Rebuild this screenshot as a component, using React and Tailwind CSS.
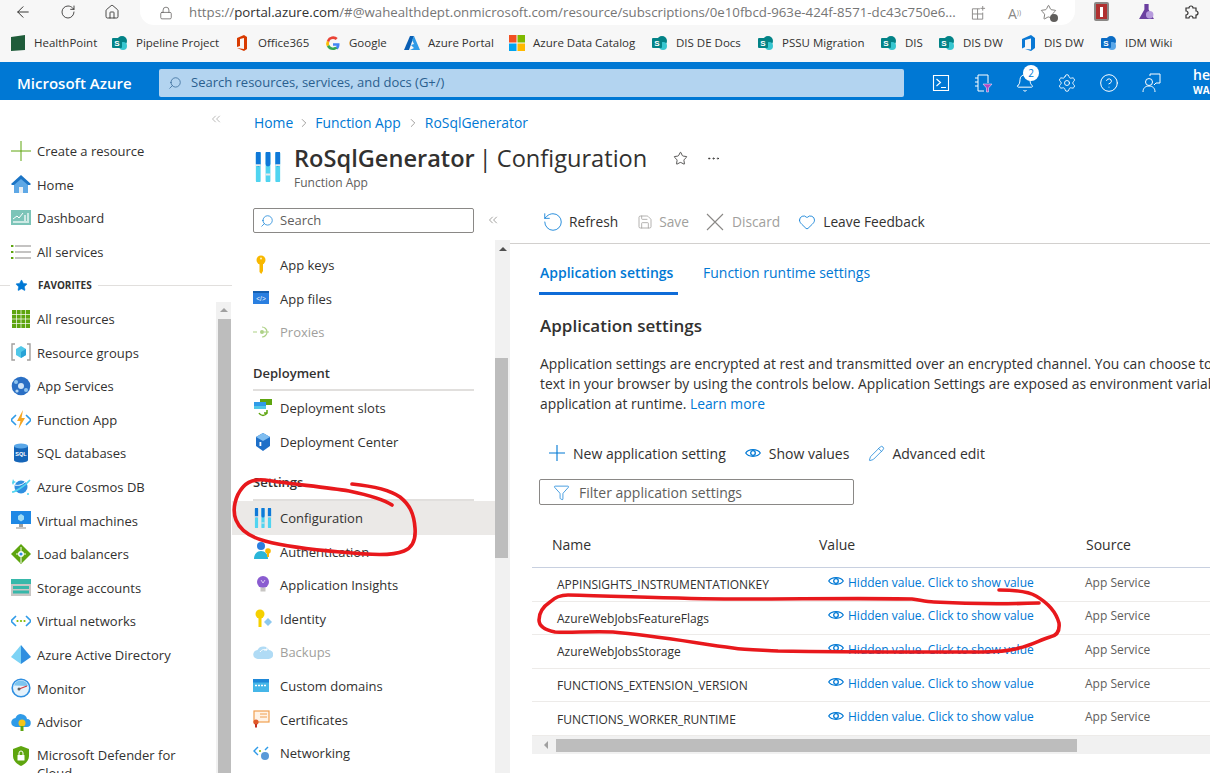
import React from 'react';
import {
  ArrowLeft, RotateCw, Lock, Star, MoreHorizontal, Pencil, Funnel, Heart, Save,
  ChevronsLeft, ChevronRight, Search, Settings, CircleHelp, Bell, Home,
} from 'lucide-react';

const Svg = ({ children, className = 'w-5 h-5' }) => (
  <svg viewBox="0 0 20 20" className={`${className} shrink-0`}>{children}</svg>
);

const EyeIcon = ({ className = 'w-[16px] h-[14px]' }) => (
  <svg viewBox="0 0 16 14" className={`${className} shrink-0`}>
    <path d="M.7 7C3.500 2.600 12.500 2.600 15.300 7C12.500 11.400 3.500 11.400 .7 7z" stroke="#0078d4" strokeWidth="1.200" fill="none" />
    <circle cx="8" cy="7" r="2.300" stroke="#0078d4" strokeWidth="1.300" fill="none" />
  </svg>
);

// Azure service icons
const PlusIcon = () => <Svg><path d="M0 10h20M10 0v20" stroke="#5ea50f" strokeWidth="1" /></Svg>;
const HomeIcon = () => <Svg><path d="M10 1L0 10l1 1h2v8h14v-8h2l1-1z" fill="#1b74c5" /><path d="M3 11l7-6 7 6v8H3z" fill="#5ea8e6" /><rect x="8" y="13" width="4" height="6" fill="#e8eef4" /></Svg>;
const DashIcon = () => <Svg><rect y="2" width="20" height="15" fill="#7cc4b8" /><path d="M2 11l4-3 2 2 4-5" stroke="#fff" fill="none" /><path d="M2 14h16M14 7v6M17 5v8" stroke="#e8f5f2" strokeWidth="1.5" /></Svg>;
const ListIcon = () => <Svg><path d="M4 4h16M4 10h16M4 16h16" stroke="#8a8886" strokeWidth="1.2" /><path d="M0 4h2.4M0 10h2.4M0 16h2.4" stroke="#5ea50f" strokeWidth="2" /></Svg>;
const GridIcon = () => (
  <Svg>
    <rect x="1" y="1" width="18" height="18" fill="#5ea50f" />
    <path d="M5.5 1v18M10 1v18M14.5 1v18M1 5.5h18M1 10h18M1 14.5h18" stroke="#fff" strokeWidth=".7" />
  </Svg>
);
const GroupIcon = () => <Svg><path d="M4 2H1v16h3M16 2h3v16h-3" stroke="#a19f9d" strokeWidth="1.4" fill="none" /><path d="M10 4l5 3v6l-5 3-5-3V7z" fill="#50c7e8" /><path d="M10 10l5-3v6l-5 3z" fill="#2aa3d6" /></Svg>;
const AppSvcIcon = () => <Svg><circle cx="10" cy="10" r="9.3" fill="#2a6fc4" /><circle cx="10" cy="10" r="3" fill="#cfe4f7" /><circle cx="5" cy="6" r="2" fill="#8fc4ef" /><circle cx="15" cy="14" r="2" fill="#8fc4ef" /><circle cx="6" cy="15" r="1.6" fill="#b7d8f3" /></Svg>;
const FuncIcon = () => <Svg><path d="M5 5l-5 5 5 5M15 5l5 5-5 5" stroke="#2f9be8" strokeWidth="1.6" fill="none" /><path d="M12 0L6 11h3.5L7.5 19 14 8h-3.5z" fill="#f5a623" /></Svg>;
const SqlIcon = () => (
  <Svg>
    <path d="M3 3v14c0 1.5 3 2.5 7 2.5s7-1 7-2.5V3z" fill="#1565b8" />
    <ellipse cx="10" cy="3" rx="7" ry="2.5" fill="#5aa7e8" />
    <text x="10" y="13" fontSize="5.5" fontWeight="700" fill="#fff" textAnchor="middle" fontFamily="Liberation Sans">SQL</text>
  </Svg>
);
const CosmosIcon = () => <Svg><circle cx="10" cy="10" r="6.5" fill="#2f8fe0" /><path d="M1 15C4 15 14 9 19 3" stroke="#50d4f0" strokeWidth="1.6" fill="none" /><path d="M4 8c3 1 7 0 10-3" stroke="#fff" fill="none" /><path d="M2 2l1 2 2 1-2 1-1 2-1-2" fill="#50d4f0" /><circle cx="17" cy="17" r="1" fill="#50d4f0" /></Svg>;
const VmIcon = () => <Svg><rect y="1" width="20" height="13" fill="#1e88e5" /><path d="M10 4l3 2v3.5l-3 2-3-2V6z" fill="#9fdcf5" /><rect x="8" y="14" width="4" height="3" fill="#a19f9d" /><rect x="5" y="17" width="10" height="2" fill="#c8c6c4" /></Svg>;
const LbIcon = () => <Svg><path d="M10 0l10 10-10 10L0 10z" fill="#5ea50f" /><circle cx="10" cy="10" r="3" fill="#fff" /><circle cx="10" cy="10" r="1.6" fill="#2f8fe0" /><path d="M10 13v6M5 10h2M13 10h2M10 3v4" stroke="#fff" /></Svg>;
const StorageIcon = () => <Svg><rect y="1" width="20" height="17" fill="#c8c6c4" /><rect y="1" width="20" height="5" fill="#37b8aa" /><rect x="2" y="8" width="16" height="3" fill="#37b8aa" /><rect x="2" y="12.5" width="16" height="3" fill="#37b8aa" /></Svg>;
const VnetIcon = () => <Svg><path d="M5 5l-5 5 5 5M15 5l5 5-5 5" stroke="#2f9be8" strokeWidth="1.6" fill="none" /><circle cx="6.5" cy="10" r="1.1" fill="#7fba00" /><circle cx="10" cy="10" r="1.1" fill="#7fba00" /><circle cx="13.5" cy="10" r="1.1" fill="#7fba00" /></Svg>;
const AadIcon = () => <Svg><path d="M10 0L0 12l10 7z" fill="#7dd3f5" /><path d="M10 0l10 12-10 7z" fill="#2f8fe0" /></Svg>;
const MonitorIcon = () => <Svg><circle cx="10" cy="10" r="8.8" fill="#e4f2fc" stroke="#2f8fe0" strokeWidth="1.6" /><path d="M10 2.5a7.5 7.5 0 0 0-7 5l14 .5a7.5 7.5 0 0 0-7-5.5z" fill="#7cc4ef" /><path d="M8 11l8-3" stroke="#d13438" strokeWidth="1.2" /><circle cx="8" cy="11" r="1.5" fill="#605e5c" /></Svg>;
const AdvisorIcon = () => <Svg><path d="M5 15a4.5 4.5 0 0 1-.5-9A6 6 0 0 1 16 7a4 4 0 0 1-.5 8z" fill="#2f9be8" /><circle cx="11" cy="11" r="3.5" fill="#f5c518" /><rect x="9.5" y="14" width="3" height="5" fill="#5ea50f" /></Svg>;
const DefenderIcon = () => <Svg><path d="M10 0l8 3v7c0 5-4 8-8 10-4-2-8-5-8-10V3z" fill="#5ea50f" /><rect x="6.5" y="9" width="7" height="5.5" rx=".6" fill="#fff" /><path d="M8 9V7a2 2 0 0 1 4 0v2" stroke="#fff" fill="none" /></Svg>;

const KeyIcon = () => <Svg><circle cx="8" cy="5" r="4.500" fill="#f8b800" /><path d="M6.500 8h3.500v8l-1.700 3-1.800-2z" fill="#f8b800" /><circle cx="8" cy="3.500" r="1" fill="#fff3c4" /></Svg>;
const FilesIcon = () => <Svg><rect y="3" width="16" height="13" fill="#2a7fe0" /><rect y="3" width="16" height="2" fill="#155fb0" /><text x="8" y="13" fontSize="6.5" fill="#fff" textAnchor="middle" fontFamily="Liberation Sans">{'</>'}</text></Svg>;
const ProxyIcon = () => <Svg className="w-5 h-5 opacity-50"><path d="M0 10h4M11 10h5M16 10h0" stroke="#5ea50f" strokeWidth="1.2" /><path d="M9 5a5 5 0 1 1 0 10" stroke="#5ea50f" strokeWidth="1.2" fill="none" /><circle cx="9" cy="10" r="2" fill="#5ea50f" /></Svg>;
const SlotsIcon = () => <Svg><rect x="7" y="1" width="12" height="6" fill="#5ea50f" /><rect x="1" y="4" width="12" height="7" fill="#2f9be8" /><rect x="1" y="8" width="12" height="3" fill="#50c7e8" /><path d="M6 15a4.5 4.5 0 0 0 8 0M14 12v3h-3" stroke="#5ea50f" strokeWidth="1.5" fill="none" /></Svg>;
const CenterIcon = () => <Svg><path d="M10 1l7 4v9l-7 5-7-5V5z" fill="#1e6fc8" /><path d="M3 5l7 4 7-4-7-4z" fill="#7fbdf0" /><rect x="6.5" y="10" width="1.8" height="4" fill="#fff" /></Svg>;
const BarsIcon = ({ className }) => (
  <Svg className={className}>
    <path d="M3.500 1v18M10 1v18M16.500 1v18" stroke="#50d4f0" strokeWidth="3.200" strokeLinecap="round" />
    <path d="M3.500 1v7M10 1v7M16.500 1v7" stroke="#0f78d8" strokeWidth="3.200" strokeLinecap="round" />
    <path d="M1.900 8.800h3.200M8.400 15h3.200M14.900 8.800h3.200" stroke="#e8e8e8" strokeWidth="1.200" />
  </Svg>
);
const AuthIcon = () => <Svg><circle cx="8" cy="5" r="4" fill="#2a7fe0" /><path d="M1 18c0-5 3-8 7-8s7 3 7 8z" fill="#2ab5d8" /><circle cx="15" cy="10" r="2.8" fill="#f8b800" /><rect x="14" y="12" width="2" height="4" fill="#f8b800" /></Svg>;
const BulbIcon = () => <Svg><circle cx="10" cy="7" r="6" fill="#8a5cd0" /><rect x="7.5" y="12.5" width="5" height="4" fill="#c8c6c4" /><path d="M8 5l2 3 2-3" stroke="#d9c7f2" fill="none" /></Svg>;
const IdentityIcon = () => <Svg><circle cx="7" cy="5" r="4.5" fill="#f5d000" /><rect x="5.5" y="8" width="3" height="10" fill="#f5d000" /><path d="M15 9l4 4-4 4-4-4z" fill="#8cc8ef" /></Svg>;
const CloudIcon = () => <Svg className="w-5 h-5 opacity-60"><path d="M5 17a4.5 4.5 0 0 1-.5-9A6.5 6.5 0 0 1 16 8a4.5 4.5 0 0 1-.5 9z" fill="#7cc4ef" /><path d="M7 10c2-3 5-3 7-2M14 5v3h-3" stroke="#fff" fill="none" /></Svg>;
const DomainIcon = () => <Svg><rect y="3" width="16" height="13" fill="#45b6e8" /><rect y="3" width="16" height="3.5" fill="#1e88d8" /><path d="M2 9.5h12" stroke="#fff" strokeDasharray="2 1" strokeWidth="1.4" /></Svg>;
const CertIcon = () => <Svg><rect x="1" y="2" width="15" height="11" fill="#fff3e6" stroke="#f0a050" strokeWidth="1.2" /><path d="M7 5h7M7 8h7" stroke="#f0a050" /><circle cx="3" cy="13" r="2.6" fill="#e0582a" /><path d="M2 15v4l1-1 1 1v-4" fill="#c03020" /></Svg>;
const NetIcon = () => <Svg><path d="M5 4L1 8l4 4" stroke="#2f9be8" strokeWidth="1.4" fill="none" /><path d="M15 4l-3 3" stroke="#2f9be8" strokeWidth="1.4" /><circle cx="12" cy="13" r="4" fill="#5a9ad8" /><circle cx="7" cy="8" r="1" fill="#7fba00" /></Svg>;

// Browser bookmark icons
const ShareP = ({ color = '#038387', light = '#37c6d0' }) => (
  <svg viewBox="0 0 16 16" className="w-4 h-4 shrink-0">
    <circle cx="10" cy="6" r="5" fill={color} />
    <circle cx="11" cy="11" r="4" fill={light} />
    <rect x="0" y="3" width="10" height="10" rx="1" fill={color} />
    <text x="5" y="11" fontSize="8" fontWeight="700" fill="#fff" textAnchor="middle" fontFamily="Liberation Sans">S</text>
  </svg>
);
const bookmarks = [
  { label: 'HealthPoint', w: 'w-[102px]', icon: <svg viewBox="0 0 16 16" className="w-4 h-4 shrink-0"><path d="M1 2l14-2v15l-14 1z" fill="#1f5c3a" /></svg> },
  { label: 'Pipeline Project', w: 'w-[122px]', icon: <ShareP /> },
  { label: 'Office365', w: 'w-[91px]', icon: <svg viewBox="0 0 16 16" className="w-4 h-4 shrink-0"><path d="M3 3l7-3 3 2v12l-3 2-7-3 7 1V3L6 4v7l-3 1z" fill="#d83b01" /></svg> },
  { label: 'Google', w: 'w-[79px]', icon: (
    <svg viewBox="0 0 16 16" className="w-4 h-4 shrink-0">
      <path d="M14.5 8.2H8v2.6h3.7a4 4 0 0 1-1.4 2l2.2 1.7c1.300-1.200 2-3 2-5 0-.5 0-.9 0-1.300z" fill="#4285f4" />
      <path d="M8 15c1.900 0 3.400-.6 4.500-1.500l-2.200-1.700A4 4 0 0 1 4.200 9.700L1.900 11.400A7 7 0 0 0 8 15z" fill="#34a853" />
      <path d="M4.200 9.700a4 4 0 0 1 0-2.500L1.900 5.400a7 7 0 0 0 0 6z" fill="#fbbc05" />
      <path d="M8 4c1 0 2 .4 2.700 1l2-2A7 7 0 0 0 1.900 5.400l2.300 1.800A4 4 0 0 1 8 4z" fill="#ea4335" />
    </svg>
  ) },
  { label: 'Azure Portal', w: 'w-[105px]', icon: <svg viewBox="0 0 16 16" className="w-4 h-4 shrink-0"><path d="M6 1h4L5 15H0z" fill="#0a5fb4" /><path d="M10 1l6 14H6l4-2-3-3 3-1-2-4z" fill="#2f9be8" /></svg> },
  { label: 'Azure Data Catalog', w: 'w-[143px]', icon: (
    <svg viewBox="0 0 16 16" className="w-4 h-4 shrink-0">
      <rect width="7.500" height="7.500" fill="#f25022" /><rect x="8.500" width="7.500" height="7.500" fill="#7fba00" />
      <rect y="8.500" width="7.500" height="7.500" fill="#00a4ef" /><rect x="8.500" y="8.500" width="7.500" height="7.500" fill="#ffb900" />
    </svg>
  ) },
  { label: 'DIS DE Docs', w: 'w-[106px]', icon: <ShareP /> },
  { label: 'PSSU Migration', w: 'w-[123px]', icon: <ShareP /> },
  { label: 'DIS', w: 'w-[58px]', icon: <ShareP /> },
  { label: 'DIS DW', w: 'w-[81px]', icon: <ShareP /> },
  { label: 'DIS DW', w: 'w-[81px]', icon: <svg viewBox="0 0 16 16" className="w-4 h-4 shrink-0"><path d="M15 3v10l-4 3-6-2 6 .5V3.500L5 5v7l-3 1.500V4l9-4z" fill="#0a78d4" /></svg> },
  { label: 'IDM Wiki', w: 'w-[90px]', icon: <ShareP color="#0b6cc4" light="#5aa7e8" /> },
];

const navTop = [
  ['Create a resource', PlusIcon], ['Home', HomeIcon], ['Dashboard', DashIcon], ['All services', ListIcon],
];
const navFav = [
  ['All resources', GridIcon], ['Resource groups', GroupIcon], ['App Services', AppSvcIcon], ['Function App', FuncIcon],
  ['SQL databases', SqlIcon], ['Azure Cosmos DB', CosmosIcon], ['Virtual machines', VmIcon], ['Load balancers', LbIcon],
  ['Storage accounts', StorageIcon], ['Virtual networks', VnetIcon], ['Azure Active Directory', AadIcon], ['Monitor', MonitorIcon],
  ['Advisor', AdvisorIcon],
];

const settings = [
  ['APPINSIGHTS_INSTRUMENTATIONKEY'], ['AzureWebJobsFeatureFlags'], ['AzureWebJobsStorage'],
  ['FUNCTIONS_EXTENSION_VERSION'], ['FUNCTIONS_WORKER_RUNTIME'],
];

function NavRow({ label, Icon }) {
  return (
    <div className="h-[33.6px] flex items-center pl-[11px] gap-[6px] text-[13px] text-[#323130] whitespace-nowrap">
      <Icon />
      <span className="pt-[2px]">{label}</span>
    </div>
  );
}

function MenuRow({ label, Icon, disabled, active }) {
  return (
    <div className={`h-[33.6px] flex items-center pl-[21px] gap-[7px] text-[13px] whitespace-nowrap ${disabled ? 'text-[#a19f9d]' : 'text-[#323130]'} ${active ? 'bg-[#ebe9e7]' : ''}`}>
      <Icon />
      <span className="pt-[2px]">{label}</span>
    </div>
  );
}

function MenuHeader({ label }) {
  return (
    <div className="h-[42.5px] ml-[21px] mr-[21px] flex items-end pb-[6px] border-b-2 border-[#e1dfdd] text-[13px] font-semibold text-[#323130]">
      {label}
    </div>
  );
}

export default function App() {
  return (
    <div className="relative w-[1210px] h-[773px] overflow-hidden bg-white flex flex-col font-['Open_Sans',sans-serif]">
      {/* Browser toolbar */}
      <div className="h-[25px] shrink-0 bg-[#f7f7f7] flex items-start">
        <div className="w-[140px] h-[23px] flex items-center pl-[14px] text-[#323130]">
          <ArrowLeft className="w-[18px] h-[18px]" strokeWidth={1.3} />
          <RotateCw className="w-[16px] h-[16px] ml-[28px]" strokeWidth={1.3} />
          <Home className="w-[16px] h-[16px] ml-[28px]" strokeWidth={1.3} />
        </div>
        <div className="w-[935px] h-[25px] bg-white rounded-b-[14px] flex items-center pl-[19px] pt-[1px] text-[13.25px] whitespace-nowrap">
          <Lock className="w-[14px] h-[14px] text-[#605e5c]" strokeWidth={1.3} />
          <span className="ml-[16px] text-[#767676] w-[768px]">
            https://<span className="text-[#323130]">portal.azure.com</span>/#@wahealthdept.onmicrosoft.com/resource/subscriptions/0e10fbcd-963e-424f-8571-dc43c750e6...
          </span>
          <svg viewBox="0 0 16 16" className="w-[15px] h-[15px] ml-[14px] text-[#8a8886]"><path d="M1.500 3h8M1.500 3v11h11V7M7 3v11M1.500 8.500h11M12.500 0v5M10 2.500h5" stroke="currentColor" fill="none" /></svg>
          <span className="ml-[22px] text-[14px] text-[#8a8886]">A<sup className="text-[7px]">))</sup></span>
          <span className="relative ml-[19px] w-[18px] h-[18px] text-[#605e5c]">
            <Star className="w-[17px] h-[17px]" strokeWidth={1.1} />
            <span className="absolute right-0 bottom-0 w-[8px] h-[8px] rounded-full bg-[#605e5c]" />
          </span>
        </div>
        <div className="flex-1 h-[23px] flex items-center pl-[19px]">
          <div className="w-[15px] h-[19px] bg-[#b03030] border-2 border-[#8a8886] rounded-[2px] flex items-center justify-center">
            <div className="w-[3px] h-[10px] bg-white" />
          </div>
          <svg viewBox="0 0 16 16" className="w-[17px] h-[17px] ml-[29px]"><path d="M5 1h6M6 1v5L1 15h14L10 6V1z" fill="#6b3fa0" /><circle cx="11" cy="11" r="3.500" fill="#b79bdd" /></svg>
          <svg viewBox="0 0 16 16" className="w-[16px] h-[16px] ml-[28px]"><path d="M3 4h3a2 2 0 0 1 4 0h3v3a2 2 0 0 1 0 4v3H10a2 2 0 0 0-4 0H3v-3a2 2 0 0 0 0-4z" stroke="#323130" fill="none" strokeWidth="1.200" /></svg>
        </div>
      </div>

      {/* Bookmarks */}
      <div className="h-[37px] shrink-0 bg-[#f7f7f7] flex items-center pl-[10px] pb-[1px] text-[11.5px] text-[#323130] whitespace-nowrap">
        {bookmarks.map((b, i) => (
          <div key={i} className={`${b.w} shrink-0 flex items-center gap-[8px]`}>
            {b.icon}
            <span>{b.label}</span>
          </div>
        ))}
      </div>

      {/* Azure header */}
      <div className="h-[38px] shrink-0 bg-[#0078d4] flex items-center pt-[4px] text-white">
        <div className="w-[159px] pl-[17px] text-[15px] font-semibold whitespace-nowrap">Microsoft Azure</div>
        <div className="w-[745px] h-[28px] bg-[#b3d4f0] rounded-[2px] flex items-center pl-[9px] gap-[9px] text-[13px] text-[#2a5f8f]">
          <Search className="w-[14px] h-[14px] -scale-x-100" strokeWidth={1.2} />
          <span>Search resources, services, and docs (G+/)</span>
        </div>
        <div className="flex items-center pl-[27px] gap-[22px]">
          <svg viewBox="0 0 20 20" className="w-[20px] h-[20px]"><path d="M2.500 2.500h15v15h-15zM5.500 6l4 3.500-4 3.500M10 14.500h5" stroke="#fff" fill="none" strokeWidth="1.100" /></svg>
          <svg viewBox="0 0 20 20" className="w-[20px] h-[20px]"><path d="M5 2h10v8M5 2v16h6M2 5h3M2 9h3M2 13h3" stroke="#fff" fill="none" /><path d="M10 11h9l-3.500 4v4h-2v-4z" fill="#b146c2" stroke="#fff" strokeWidth=".5" /></svg>
          <span className="relative">
            <Bell className="w-[20px] h-[20px]" strokeWidth={1.2} />
            <span className="absolute -top-[8px] left-[8px] w-[16px] h-[16px] rounded-full bg-white text-[#0078d4] text-[10px] flex items-center justify-center">2</span>
          </span>
          <Settings className="w-[20px] h-[20px]" strokeWidth={1.1} />
          <CircleHelp className="w-[20px] h-[20px]" strokeWidth={1.2} />
          <svg viewBox="0 0 20 20" className="w-[20px] h-[20px]"><circle cx="8" cy="9" r="3.500" stroke="#fff" fill="none" /><path d="M2 19c0-4 2.500-6 6-6s6 2 6 6M9 3V1h10v9h-4l-2 2" stroke="#fff" fill="none" /></svg>
          <div className="leading-none pl-[10px] -mt-[4px]">
            <div className="text-[14px] font-semibold">he</div>
            <div className="text-[10px] font-bold mt-[3px]">WA</div>
          </div>
        </div>
      </div>

      {/* Body */}
      <div className="flex-1 flex min-h-0">
        {/* Left nav */}
        <div className="w-[232px] shrink-0 flex flex-col">
          <div className="h-[34px] shrink-0 flex items-start justify-end pt-[12px] pr-[9px] text-[#8a8886]">
            <ChevronsLeft className="w-[14px] h-[14px]" strokeWidth={1} />
          </div>
          {navTop.map(([label, Icon]) => <NavRow key={label} label={label} Icon={Icon} />)}
          <div className="h-[33.6px] shrink-0 flex items-center text-[10px] font-bold text-[#323130] whitespace-nowrap">
            <div className="w-[10px] h-px bg-[#e1dfdd]" />
            <Star className="w-[13px] h-[13px] ml-[5px] text-[#0078d4] fill-[#0078d4]" strokeWidth={1} />
            <span className="ml-[10px]">FAVORITES</span>
            <div className="flex-1 h-px bg-[#e1dfdd] ml-[6px]" />
          </div>
          <div className="flex-1 flex min-h-0">
            <div className="flex-1 min-w-0">
              {navFav.map(([label, Icon]) => <NavRow key={label} label={label} Icon={Icon} />)}
              <div className="flex pl-[11px] gap-[6px] pt-[7px] text-[13px] leading-[18px] text-[#323130]">
                <DefenderIcon />
                <span className="w-[150px]">Microsoft Defender for Cloud</span>
              </div>
            </div>
            <div className="w-[15px] mr-[1px] shrink-0 bg-[#f1f1f1] flex flex-col items-center">
              <div className="h-[17px] flex items-center justify-center">
                <div className="w-0 h-0 border-x-[4px] border-x-transparent border-b-[4px] border-b-[#a0a0a0]" />
              </div>
              <div className="flex-1 w-[13px] ml-[2px] bg-[#bdbdbd]" />
            </div>
          </div>
        </div>

        {/* Blade */}
        <div className="flex-1 min-w-0 flex flex-col">
          <div className="h-[100px] shrink-0 pl-[22px] pt-[12px]">
            <div className="flex items-center text-[13.9px] text-[#0078d4] h-[22px] whitespace-nowrap">
              <span>Home</span><ChevronRight className="w-[14px] h-[14px] mx-[4px] text-[#605e5c]" strokeWidth={1} />
              <span>Function App</span><ChevronRight className="w-[14px] h-[14px] mx-[5px] text-[#605e5c]" strokeWidth={1} />
              <span>RoSqlGenerator</span>
            </div>
            <div className="flex items-start mt-[9px]">
              <BarsIcon className="w-[30px] h-[30px] -ml-[1px] mt-[9px]" />
              <div className="ml-[11px] whitespace-nowrap">
                <div className="flex items-center text-[#323130] text-[23.6px] leading-[30px]">
                  <span className="font-semibold">RoSqlGenerator</span>
                  <span className="ml-[4px]">|</span>
                  <span className="ml-[5px]">Configuration</span>
                  <Star className="w-[15px] h-[15px] ml-[26px]" strokeWidth={1.3} />
                  <MoreHorizontal className="w-[15px] h-[15px] ml-[18px]" strokeWidth={1.3} />
                </div>
                <div className="text-[12px] leading-[16px] text-[#605e5c] mt-[2px]">Function App</div>
              </div>
            </div>
          </div>

          <div className="flex-1 flex min-h-0">
            {/* Resource menu */}
            <div className="w-[278px] shrink-0 flex flex-col">
              <div className="h-[40px] shrink-0 flex items-start pl-[21px] pt-[8px]">
                <div className="w-[221px] h-[25px] border border-[#8a8886] rounded-[2px] flex items-center pl-[6px] gap-[6px] text-[13px] text-[#605e5c]">
                  <Search className="w-[14px] h-[14px] text-[#0078d4] -scale-x-100" strokeWidth={1.2} />
                  <span>Search</span>
                </div>
                <ChevronsLeft className="w-[14px] h-[14px] ml-[12px] mt-[5px] text-[#605e5c]" strokeWidth={1} />
              </div>
              <div className="flex-1 flex min-h-0">
                <div className="w-[263px] pt-[8px]">
                  <MenuRow label="App keys" Icon={KeyIcon} />
                  <MenuRow label="App files" Icon={FilesIcon} />
                  <MenuRow label="Proxies" Icon={ProxyIcon} disabled />
                  <MenuHeader label="Deployment" />
                  <MenuRow label="Deployment slots" Icon={SlotsIcon} />
                  <MenuRow label="Deployment Center" Icon={CenterIcon} />
                  <MenuHeader label="Settings" />
                  <MenuRow label="Configuration" Icon={BarsIcon} active />
                  <MenuRow label="Authentication" Icon={AuthIcon} />
                  <MenuRow label="Application Insights" Icon={BulbIcon} />
                  <MenuRow label="Identity" Icon={IdentityIcon} />
                  <MenuRow label="Backups" Icon={CloudIcon} disabled />
                  <MenuRow label="Custom domains" Icon={DomainIcon} />
                  <MenuRow label="Certificates" Icon={CertIcon} />
                  <MenuRow label="Networking" Icon={NetIcon} />
                </div>
                <div className="w-[15px] bg-[#f1f1f1] flex flex-col">
                  <div className="h-[17px] flex items-center justify-center">
                    <div className="w-0 h-0 border-x-[4px] border-x-transparent border-b-[4px] border-b-[#505050]" />
                  </div>
                  <div className="h-[101px]" />
                  <div className="h-[200px] w-[13px] bg-[#bdbdbd]" />
                </div>
              </div>
            </div>

            {/* Configuration pane */}
            <div className="flex-1 min-w-0 flex flex-col whitespace-nowrap text-[#323130]">
              <div className="h-[44px] shrink-0 border-b border-[#d2d0ce] flex items-center pl-[32px] pt-[1px] text-[13.75px]">
                <RotateCw className="w-[22px] h-[22px] text-[#0078d4] -scale-x-100" strokeWidth={0.9} />
                <span className="ml-[5px]">Refresh</span>
                <Save className="w-[16px] h-[16px] ml-[19px] text-[#a19f9d]" strokeWidth={1.2} />
                <span className="ml-[6px] text-[#a19f9d]">Save</span>
                <svg viewBox="0 0 18 18" className="w-[18px] h-[18px] ml-[17px]"><path d="M1 1l16 16M17 1L1 17" stroke="#8a8886" strokeWidth="1.1" /></svg>
                <span className="ml-[8px] text-[#a19f9d]">Discard</span>
                <Heart className="w-[18px] h-[18px] ml-[18px] text-[#0078d4]" strokeWidth={1.1} />
                <span className="ml-[7px]">Leave Feedback</span>
              </div>

              <div className="pl-[29px]">
                <div className="flex h-[51px] text-[14px] text-[#0078d4]">
                  <div className="w-[139px] border-b-[3px] border-[#0f6cd8] pt-[18px] pl-px font-semibold">Application settings</div>
                  <div className="ml-[25px] pt-[18px]">Function runtime settings</div>
                </div>
                <h2 className="mt-[20px] pl-px text-[17px] leading-[22px] font-semibold">Application settings</h2>
                <p className="mt-[17px] pl-px text-[13.85px] leading-[20px]">
                  Application settings are encrypted at rest and transmitted over an encrypted channel. You can choose to<br />
                  text in your browser by using the controls below. Application Settings are exposed as environment variables<br />
                  application at runtime. <span className="text-[#0078d4]">Learn more</span>
                </p>
                <div className="flex items-center h-[20px] mt-[29px] pl-[9px] text-[14px]">
                  <svg viewBox="0 0 16 16" className="w-[16px] h-[16px] ml-px"><path d="M0 8h16M8 0v16" stroke="#0078d4" strokeWidth="1.1" /></svg>
                  <span className="ml-[8px]">New application setting</span>
                  <EyeIcon className="w-[16px] h-[14px] ml-[19px]" />
                  <span className="ml-[8px]">Show values</span>
                  <Pencil className="w-[17px] h-[17px] ml-[19px] text-[#0078d4]" strokeWidth={1} />
                  <span className="ml-[7px]">Advanced edit</span>
                </div>
                <div className="w-[315px] h-[26px] mt-[16px] border border-[#8a8886] rounded-[2px] flex items-center pl-[13px] text-[14px] text-[#605e5c]">
                  <Funnel className="w-[17px] h-[17px] text-[#0078d4]" strokeWidth={1} />
                  <span className="ml-[9px]">Filter application settings</span>
                </div>
              </div>

              <div className="ml-[22px] mt-[21px]">
                <div className="h-[42px] flex items-center pb-[5px] border-b border-[#c8d0e0] text-[14px]">
                  <div className="w-[287px] pl-[20px]">Name</div>
                  <div className="w-[267px]">Value</div>
                  <div>Source</div>
                </div>
                {settings.map(([name]) => (
                  <div key={name} className="h-[33.6px] flex items-center border-b border-[#edebe9] last:border-b-0 text-[12px]">
                    <div className="w-[296px] pl-[25px] pt-[2px] text-[#323130]">{name}</div>
                    <div className="w-[257px] flex items-center gap-[4px] -mt-[3px] text-[#0078d4]">
                      <EyeIcon className="w-[16px] h-[14px] -mt-[3px]" />
                      <span>Hidden value. Click to show value</span>
                    </div>
                    <div className="-mt-[3px] text-[#605e5c]">App Service</div>
                  </div>
                ))}
                <div className="h-[18px] bg-[#f1f1f1] flex items-center">
                  <div className="w-[24px] pl-[12px] flex">
                    <div className="w-0 h-0 border-y-[4px] border-y-transparent border-r-[4px] border-r-[#a0a0a0]" />
                  </div>
                  <div className="w-[521px] h-[13px] mt-px bg-[#bdbdbd]" />
                </div>
              </div>
            </div>
          </div>
        </div>
      </div>

      {/* Red pen annotations */}
      <svg viewBox="0 0 1210 773" className="absolute inset-0 w-[1210px] h-[773px] pointer-events-none">
        <g fill="none" stroke="#e8181c" strokeWidth="3.6" strokeLinecap="round" strokeLinejoin="round">
          <path d="M352 484C372 486 390 490 400 497C410 505 414 514 415 528C416 540 412 548 404 551C392 556 372 555 340 552C305 549 280 545 265 541C250 537 240 530 236 520C232 510 235 496 243 487C248 481 255 479 265 480C290 484 325 487 349 491C368 495 383 499 392 505" />
          <path d="M999 590C1015 590 1028 591 1036 596C1048 603 1056 612 1059 623C1060 632 1056 636 1050 637C1040 640 1030 646 1019 648C1005 652 990 652 960 652C900 652 830 652 778 651C760 650 745 650 733 648C690 642 650 635 613 632C590 631 570 633 555 632C545 630 539 626 539 620C539 612 544 606 550 602C555 597 562 595 568 595C620 596 680 599 733 599C800 599 870 598 912 599C920 600 926 602 934 602C970 604 1010 604 1039 603" />
        </g>
      </svg>
    </div>
  );
}
